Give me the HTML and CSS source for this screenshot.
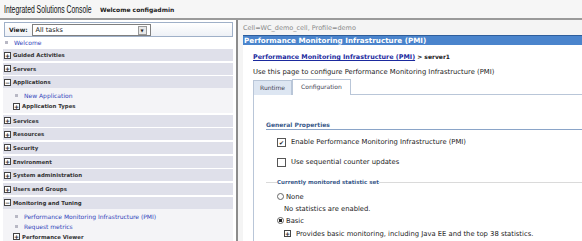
FILE: index.html
```html
<!DOCTYPE html>
<html lang="en">
<head>
    <meta charset="UTF-8">
    <title>Integrated Solutions Console</title>
    <link rel="stylesheet" href="styles.css">
</head>
<body>

    <header class="banner">
        <span class="product"><span class="product-text">Integrated Solutions Console</span></span>
        <span class="welcome">Welcome configadmin</span>
    </header>

    <div class="layout">
        <nav class="sidebar">
            <div class="view-box">
                <span class="view-label">View:</span>
                <span class="view-select">All tasks<span class="arrow">&#9660;</span></span>
            </div>
            <div class="leaf top-leaf"><span class="dot"></span><a href="#">Welcome</a></div>

            <div class="section"><span class="box">+</span>Guided Activities</div>
            <div class="section"><span class="box">+</span>Servers</div>
            <div class="section open"><span class="box">&minus;</span>Applications</div>
            <div class="children">
                <div class="leaf"><span class="dot"></span><a href="#">New Application</a></div>
                <div class="folder"><span class="box">+</span>Application Types</div>
            </div>
            <div class="section"><span class="box">+</span>Services</div>
            <div class="section"><span class="box">+</span>Resources</div>
            <div class="section"><span class="box">+</span>Security</div>
            <div class="section"><span class="box">+</span>Environment</div>
            <div class="section"><span class="box">+</span>System administration</div>
            <div class="section"><span class="box">+</span>Users and Groups</div>
            <div class="section open"><span class="box">&minus;</span>Monitoring and Tuning</div>
            <div class="children">
                <div class="leaf"><span class="dot"></span><a href="#">Performance Monitoring Infrastructure (PMI)</a></div>
                <div class="leaf"><span class="dot"></span><a href="#">Request metrics</a></div>
                <div class="folder"><span class="box">+</span>Performance Viewer</div>
            </div>
        </nav>

        <main class="content">
            <div class="scope">Cell=WC_demo_cell, Profile=demo</div>
            <div class="title-bar">Performance Monitoring Infrastructure (PMI)</div>
            <div class="panel">
                <div class="crumbs"><a href="#">Performance Monitoring Infrastructure (PMI)</a> &gt; <b>server1</b></div>
                <p class="intro">Use this page to configure Performance Monitoring Infrastructure (PMI)</p>

                <div class="tabs">
                    <span class="tab">Runtime</span>
                    <span class="tab active">Configuration</span>
                    <span class="tab-rest"></span>
                </div>

                <div class="tab-body">
                    <h3 class="group-title">General Properties</h3>
                    <div class="check-row"><span class="check">&#10004;</span>Enable Performance Monitoring Infrastructure (PMI)</div>
                    <div class="check-row"><span class="check"></span>Use sequential counter updates</div>

                    <fieldset class="stat-set">
                        <legend>Currently monitored statistic set</legend>
                        <div class="radio-row"><span class="radio"></span>None</div>
                        <div class="note">No statistics are enabled.</div>
                        <div class="radio-row"><span class="radio on"></span>Basic</div>
                        <div class="note last"><span class="box">+</span>Provides basic monitoring, including Java EE and the top 38 statistics.</div>
                    </fieldset>
                </div>
            </div>
        </main>
    </div>

</body>
</html>
```

FILE: styles.css
```css
body {
    margin: 0;
    padding: 0;
    width: 582px;
    height: 241px;
    overflow: hidden;
    background-color: #ffffff;
    font-family: "DejaVu Sans", Verdana, sans-serif;
    font-size: 6px;
    color: #222;
}

a {
    color: #3344bb;
    text-decoration: none;
}

.banner {
    height: 18px;
    display: flex;
    align-items: center;
    padding-left: 4px;
    background-color: #f6f6f6;
    border-bottom: 2px solid #9a9a9a;
}

.product {
    display: inline-block;
    width: 90px;
    white-space: nowrap;
}

/* the console title uses a condensed face; squeeze Arial metrics to fit */
.product-text {
    display: inline-block;
    font-family: "Liberation Sans", Arial, sans-serif;
    font-size: 11px;
    color: #111;
    transform: scaleX(0.62);
    transform-origin: left center;
}

.welcome {
    margin-left: 6px;
    font-weight: bold;
    font-size: 6px;
}

.layout {
    display: flex;
}

.sidebar {
    width: 230px;
    padding: 2px 3px 0 3px;
    border-right: 2px solid #8c8c8c;
}

.view-box {
    display: flex;
    align-items: center;
    height: 13px;
    margin-left: 1px;
    padding-left: 4px;
    border: 1px solid #9fb0c8;
    background: linear-gradient(#ffffff, #eef1f6);
}

.view-label {
    font-weight: bold;
    margin-right: 4px;
}

.view-select {
    position: relative;
    width: 114px;
    height: 10px;
    line-height: 10px;
    padding-left: 3px;
    border: 1px solid #7f7f7f;
    background-color: #fff;
    font-size: 6.5px;
}

.arrow {
    position: absolute;
    right: 3px;
    top: 1px;
    width: 7px;
    height: 7px;
    line-height: 7px;
    font-size: 4px;
    text-align: center;
    border: 1px solid #999;
    background-color: #e8e8e8;
}

.leaf {
    display: flex;
    align-items: center;
    height: 10px;
    padding-left: 2px;
}

.top-leaf {
    height: 11px;
    margin-bottom: 1px;
}

.dot {
    width: 3px;
    height: 3px;
    margin-right: 6px;
    background-color: #b8b8c4;
}

.section {
    display: flex;
    align-items: center;
    height: 12px;
    margin-bottom: 1.7px;
    padding-left: 1px;
    background-color: #dfe0ea;
    font-weight: bold;
    font-size: 5.4px;
    color: #333;
}

.section.open {
    margin-bottom: 0;
}

.box {
    display: inline-block;
    width: 5px;
    height: 5px;
    margin-right: 2px;
    line-height: 5px;
    font-size: 6px;
    font-weight: bold;
    text-align: center;
    border: 1px solid #444;
    background-color: #fff;
    color: #222;
}

.children {
    padding: 2.5px 0 1px 10px;
    margin-bottom: 1.7px;
    background-color: #f4f4f7;
}

.folder {
    display: flex;
    align-items: center;
    height: 11px;
    font-weight: bold;
    font-size: 5.4px;
    color: #333;
}

.content {
    flex: 1;
    padding: 2px 0 0 5px;
    background-color: #f4f4f4;
}

.scope {
    height: 13px;
    line-height: 13px;
    font-size: 6.5px;
    color: #8a8a8a;
}

.title-bar {
    height: 9px;
    line-height: 9px;
    padding-left: 1px;
    background-color: #4a84cc;
    border-top: 1px solid #2e5e9c;
    font-size: 7.2px;
    font-weight: bold;
    color: #fff;
}

.panel {
    height: 198px;
    padding: 8px 0 0 10px;
    background-color: #ffffff;
    font-size: 6.8px;
}

.crumbs {
    font-size: 6px;
    font-weight: bold;
}

.crumbs a {
    color: #1b2a9e;
    font-size: 6.4px;
    text-decoration: underline;
}

.intro {
    margin: 7px 0 0 0;
}

.tabs {
    display: flex;
    height: 16px;
    margin-top: 3px;
    align-items: flex-end;
    font-size: 6px;
}

.tab {
    height: 14px;
    line-height: 14px;
    padding: 0 6px;
    background-color: #dde6f2;
    border: 1px solid #b9c6d8;
    border-bottom: none;
    color: #445;
}

.tab.active {
    height: 15px;
    padding: 0 8px;
    background-color: #fff;
}

.tab-rest {
    flex: 1;
    border-bottom: 1px solid #b9c6d8;
}

.tab-body {
    padding: 25.5px 0 0 12px;
    border-left: 1px solid #b9c6d8;
}

.group-title {
    margin: 0 0 2.5px 0;
    padding-bottom: 1px;
    border-bottom: 1px solid #8aa4c8;
    font-size: 6px;
    color: #3a5a8a;
}

.check-row {
    display: flex;
    align-items: center;
    height: 20px;
    padding-left: 11px;
}

.check {
    width: 7px;
    height: 7px;
    margin-right: 5px;
    line-height: 7px;
    font-size: 6px;
    text-align: center;
    border: 1px solid #555;
    background-color: #fff;
}

.stat-set {
    margin: 7px 0 0 0;
    padding: 5.5px 0 0 11px;
    border: none;
    border-top: 1px solid #dadada;
}

.stat-set legend {
    margin-left: 0;
    padding: 0;
    font-size: 5.5px;
    font-weight: bold;
    color: #3a5a8a;
}

.radio-row {
    display: flex;
    align-items: center;
    height: 12px;
}

.radio {
    width: 5px;
    height: 5px;
    margin-right: 2px;
    border: 1px solid #666;
    border-radius: 50%;
    background-color: #fff;
}

.radio.on {
    background: radial-gradient(#222 40%, #fff 50%);
}

.note {
    height: 12px;
    line-height: 12px;
    padding-left: 7px;
}

.note.last {
    height: 14px;
    line-height: 14px;
}

.note .box {
    margin-right: 5px;
}
```
